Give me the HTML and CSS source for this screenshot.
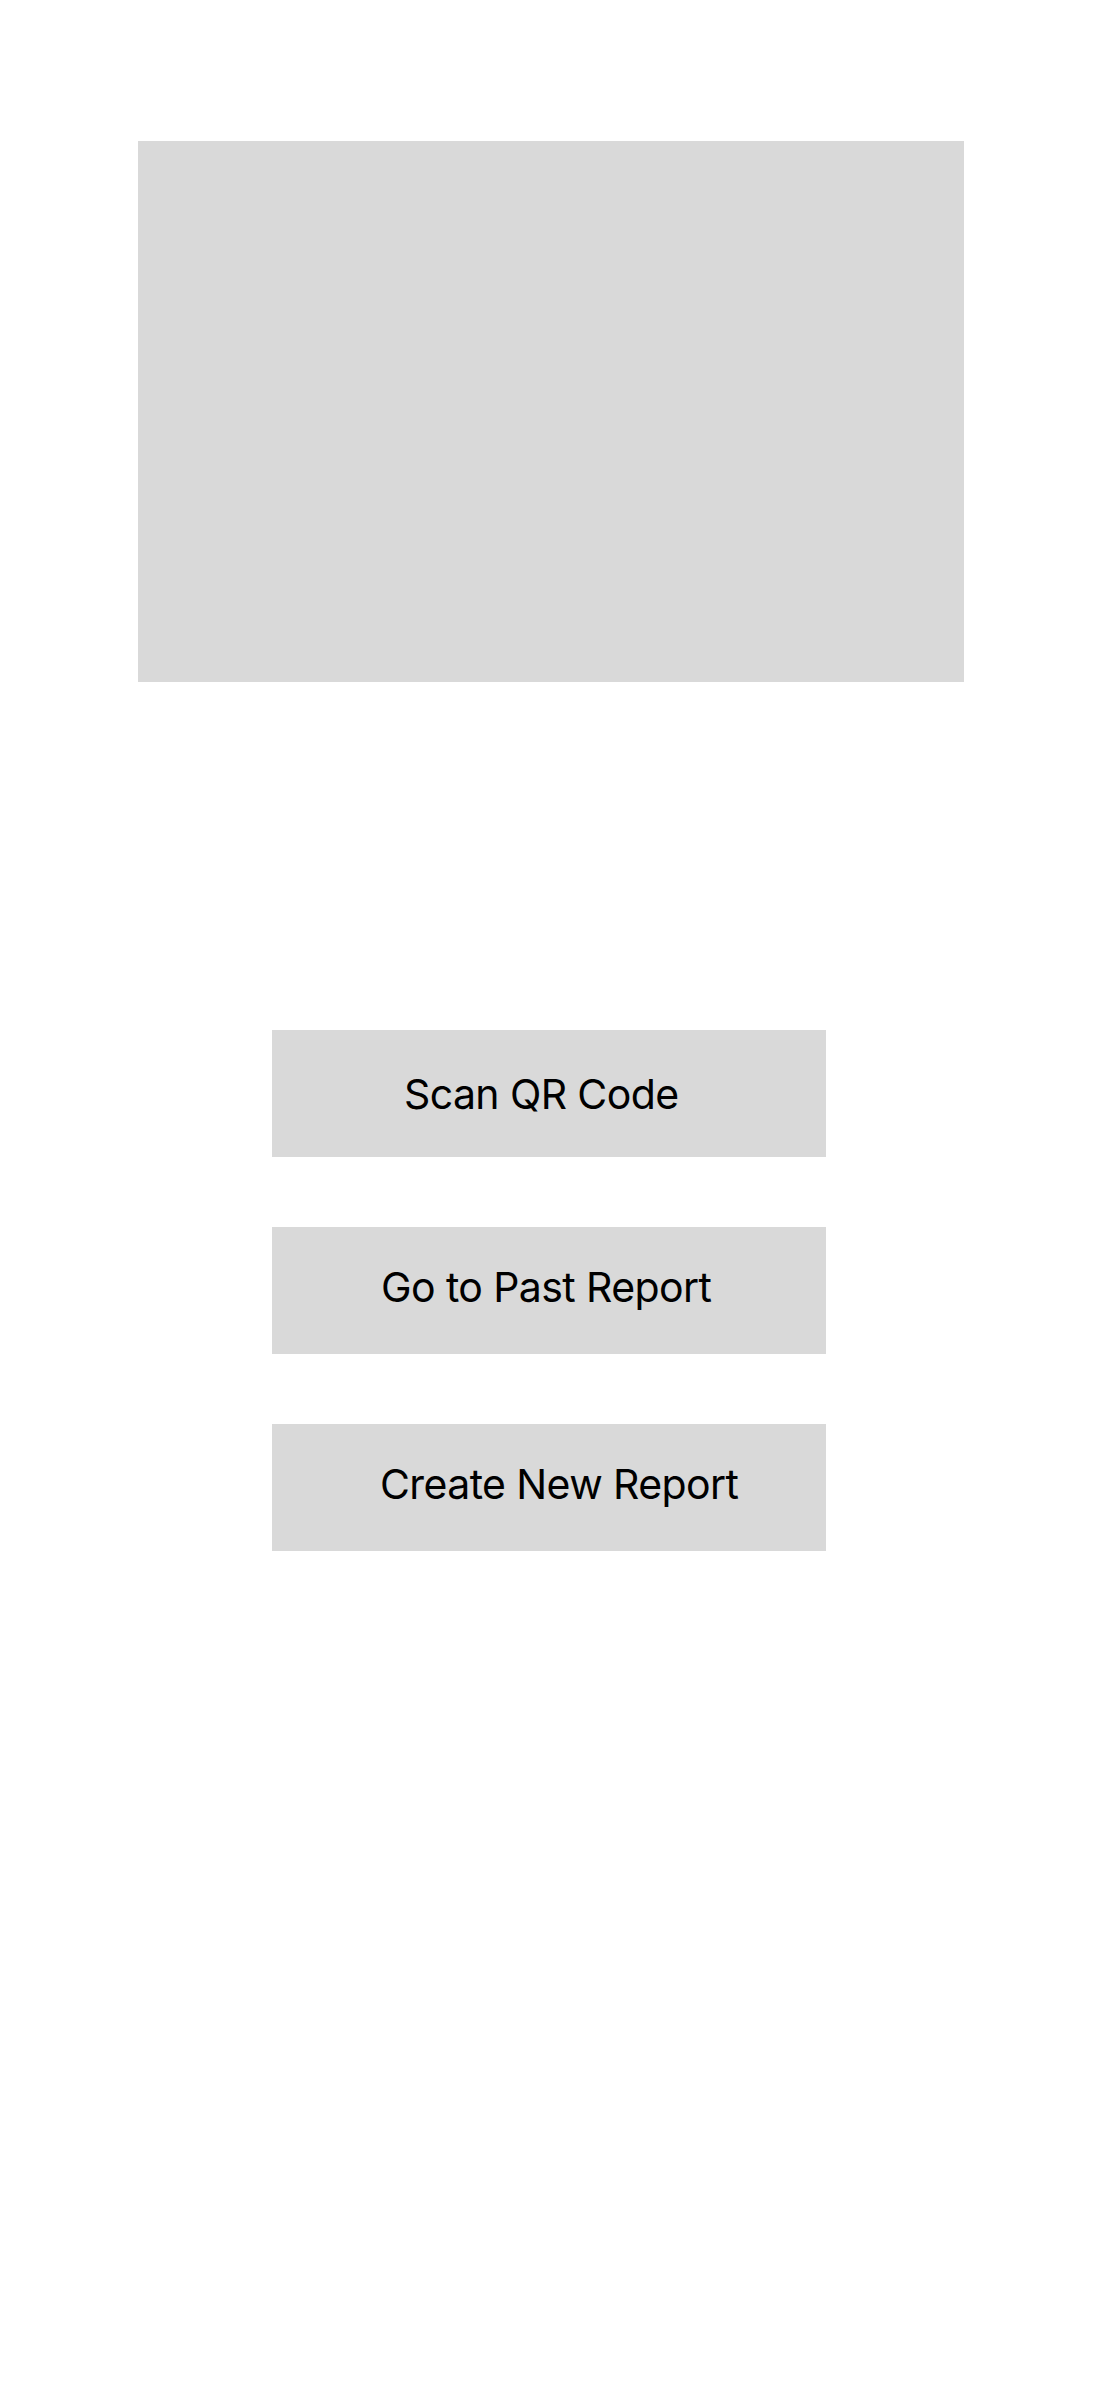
FILE: index.html
```html
<!DOCTYPE html>
<html lang="en">
<head>
<meta charset="utf-8">
<title>Home</title>
<link rel="stylesheet" href="styles.css">
</head>
<body>
<main class="page">
  <div class="hero"></div>
  <nav class="actions">
    <button class="action action-scan">Scan QR Code</button>
    <button class="action action-past">Go to Past Report</button>
    <button class="action action-new">Create New Report</button>
  </nav>
</main>
</body>
</html>
```
FILE: styles.css
```css
* { box-sizing: border-box; }
html, body { margin: 0; padding: 0; background: #ffffff; }
body { width: 1100px; height: 2381px; font-family: Inter, "Noto Sans", sans-serif; }
.page {
  display: flex;
  flex-direction: column;
  align-items: center;
  padding-top: 141px;
}
.hero {
  width: 826px;
  height: 541px;
  background: #d9d9d9;
  margin-left: 2px;
}
.actions {
  display: flex;
  flex-direction: column;
  gap: 70px;
  margin-top: 348px;
  margin-left: -2px;
}
.action {
  width: 554px;
  height: 127px;
  border: none;
  background: #d9d9d9;
  color: #000;
  font-family: Inter, "Noto Sans", sans-serif;
  font-size: 41px;
  font-weight: 400;
  letter-spacing: -0.6px;
  padding: 0;
  display: flex;
  align-items: center;
  justify-content: flex-start;
}
.action-scan { padding-left: 132px; }
.action-past { padding-left: 109px; padding-bottom: 8px; }
.action-new { padding-left: 108px; padding-bottom: 8px; }
```
